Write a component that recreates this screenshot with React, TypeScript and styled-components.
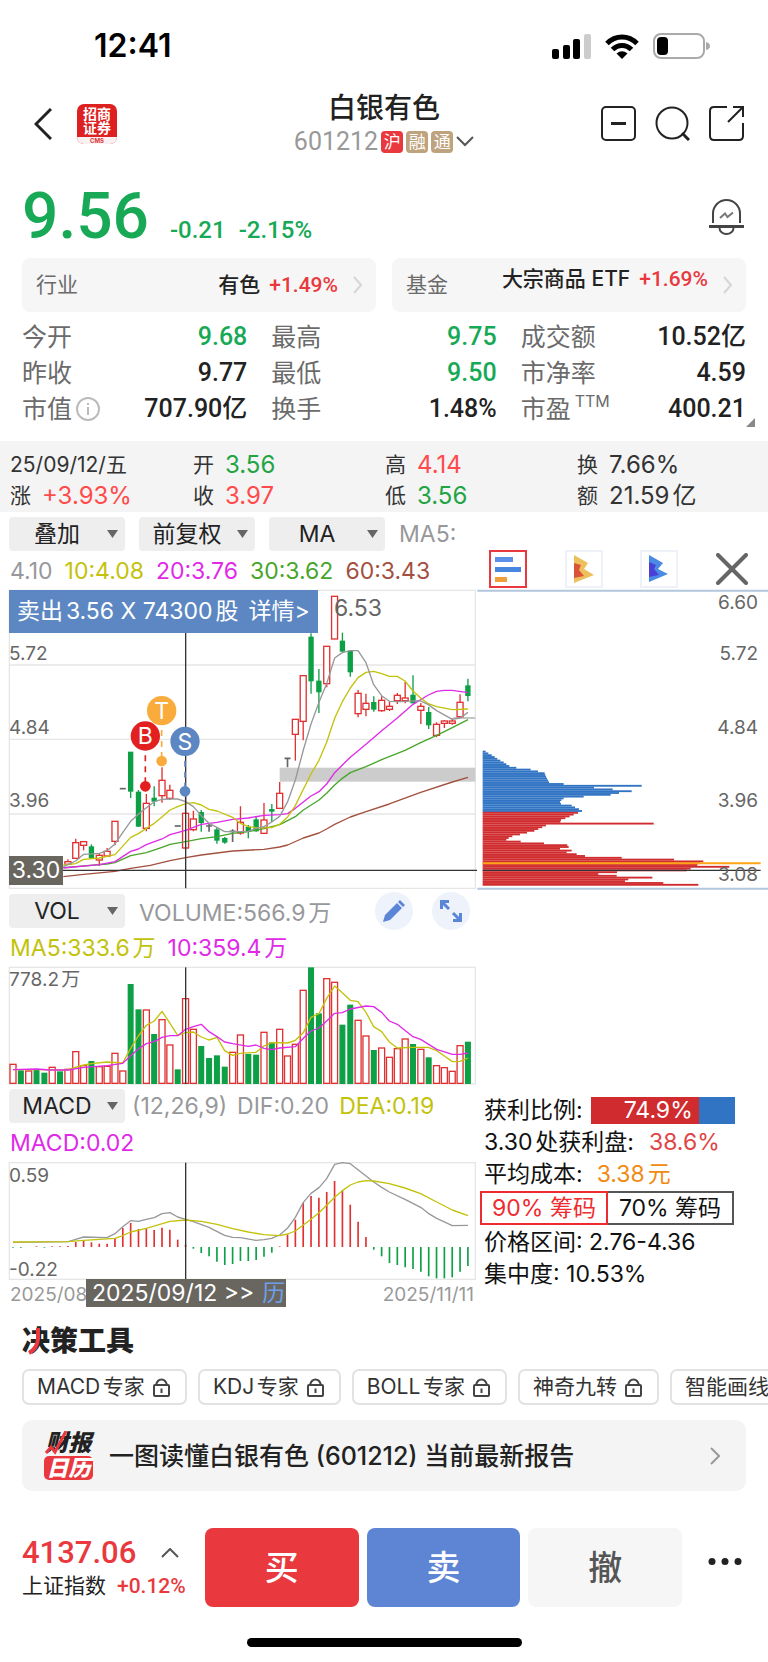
import React from "react";
import styled, { createGlobalStyle } from "styled-components";

const UI = '"Inter", "Noto Sans CJK SC", sans-serif';
const NUM = '"Roboto", "Noto Sans CJK SC", sans-serif';

const UP = "#e9383e";
const DOWN = "#18a957";
const CHART_RED = "#e03232";
const CHART_GREEN = "#0da046";
const GRID = "#e6e6e6";
const MA_GRAY = "#97989b";
const MA_YELLOW = "#c3c20b";
const MA_PINK = "#e02ae8";
const MA_GREEN = "#48a52b";
const MA_BROWN = "#a3503f";

const Global = createGlobalStyle`
  *, *::before, *::after { box-sizing: border-box; }
  body { margin: 0; background: #fff; color: #222; font-family: ${UI}; text-autospace: normal; }
  button, select { font: inherit; color: inherit; border: 0; background: none; padding: 0; margin: 0; cursor: pointer; }
  a { color: inherit; text-decoration: none; }
  dl, dd, dt, h1, h2, p { margin: 0; font-weight: inherit; }
  svg { display: block; flex: none; }
`;

const Page = styled.div`
  width: 100%;
  overflow: hidden;
`;

/* ---------- status bar and header ---------- */

const StatusBar = styled.div`
  display: flex;
  align-items: center;
  justify-content: space-between;
  height: 90px;
  padding: 2px 58px 0 94px;
  color: #000;
`;
const Clock = styled.time`
  font-size: 32px;
  line-height: 36px;
  font-weight: 600;
`;
const StatusIcons = styled.div`
  display: flex;
  align-items: center;
  gap: 14px;
`;

const Header = styled.header`
  display: grid;
  grid-template-columns: 1fr auto 1fr;
  align-items: center;
  padding: 0 24px 0 34px;
`;
const HeaderSide = styled.div<{ $end?: boolean }>`
  display: flex;
  align-items: center;
  justify-content: ${(p) => (p.$end ? "flex-end" : "flex-start")};
  gap: ${(p) => (p.$end ? 19 : 25)}px;
`;
const BrokerLogo = styled.a`
  display: flex;
  flex-direction: column;
  width: 40px;
  border-radius: 7px;
  overflow: hidden;
  background: #dd2020;
  color: #fff;
  text-align: center;
  font-size: 14px;
  line-height: 14px;
  font-weight: 700;
  padding-top: 3px;
`;
const BrokerCode = styled.span`
  margin-top: 2px;
  background: #f9f1f1;
  color: #d33;
  font-size: 6px;
  line-height: 7px;
`;
const TitleBlock = styled.div`
  display: flex;
  flex-direction: column;
  align-items: center;
  padding-right: 20px;
`;
const StockName = styled.h1`
  font-size: 28px;
  line-height: 36px;
  font-weight: 500;
  padding-left: 10px;
`;
const CodeRow = styled.button`
  display: flex;
  align-items: center;
  gap: 3px;
  padding-left: 10px;
  font-family: ${NUM};
  font-size: 25px;
  line-height: 31px;
  color: #999;
`;
const Badge = styled.span<{ $bg: string }>`
  width: 22px;
  height: 22px;
  border-radius: 4px;
  background: ${(p) => p.$bg};
  color: #fff;
  font-size: 17px;
  line-height: 22px;
  text-align: center;
`;

/* ---------- quote ---------- */

const PriceRow = styled.section`
  display: flex;
  align-items: baseline;
  gap: 13px;
  height: 60px;
  margin-top: 30px;
  padding: 0 24px 0 22px;
  font-family: ${NUM};
  font-size: 24px;
  line-height: 60px;
  font-weight: 500;
  color: ${DOWN};
`;
const Price = styled.strong`
  font-size: 64px;
  font-weight: 500;
  margin-right: 8px;
`;
const BellButton = styled.button`
  margin-left: auto;
  align-self: center;
`;

const CardRow = styled.nav`
  display: grid;
  grid-template-columns: 1fr 1fr;
  gap: 16px;
  margin-top: 11px;
  padding: 0 22px;
`;
const Card = styled.a`
  display: flex;
  align-items: center;
  height: 54px;
  padding: 0 14px;
  border-radius: 8px;
  background: #f6f6f6;
  font-size: 21px;
  line-height: 26px;
  color: #6b6b6b;
`;
const CardValue = styled.span<{ $raised?: boolean }>`
  display: flex;
  gap: 9px;
  margin-left: auto;
  margin-right: 15px;
  padding-bottom: ${(p) => (p.$raised ? 12 : 0)}px;
  font-weight: 500;
  color: #222;
`;
const Rise = styled.span`
  font-family: ${NUM};
  font-weight: 500;
  color: ${UP};
`;

const Quotes = styled.dl`
  display: grid;
  grid-template-columns: repeat(3, 1fr);
  column-gap: 24px;
  position: relative;
  margin-top: 7px;
  padding: 0 22px;
  font-size: 25px;
  line-height: 36px;
`;
const Quote = styled.div`
  display: flex;
  justify-content: space-between;
`;
const QuoteLabel = styled.dt`
  display: flex;
  align-items: center;
  gap: 4px;
  color: #6b6b6b;
`;
const Ttm = styled.sup`
  font-size: 16px;
  line-height: 16px;
  align-self: flex-start;
  padding-top: 2px;
`;
const QuoteValue = styled.dd<{ $c?: string }>`
  font-family: ${NUM};
  font-weight: 500;
  text-autospace: no-autospace;
  color: ${(p) => p.$c ?? "#222"};
`;
const Corner = styled.svg`
  position: absolute;
  right: 13px;
  bottom: 0;
`;

/* ---------- selected-day band ---------- */

const Band = styled.dl`
  display: grid;
  grid-template-columns: 183fr 192fr 192fr 191fr;
  margin-top: 14px;
  padding: 8px 0 1px 10px;
  background: #f4f4f4;
  font-size: 24px;
  line-height: 31px;
  color: #333;
`;
const BandItem = styled.div`
  display: flex;
  gap: 11px;
`;
const BandLabel = styled.dt`
  font-size: 21px;
`;
const BandValue = styled.dd<{ $c?: string; $small?: boolean }>`
  font-size: ${(p) => (p.$small ? 21 : 24)}px;
  color: ${(p) => p.$c ?? "#333"};
`;

/* ---------- charts ---------- */

const Board = styled.main`
  display: grid;
  grid-template-columns: minmax(0, 476fr) minmax(0, 292fr);
`;
const Column = styled.div`
  display: flex;
  flex-direction: column;
  min-width: 0;
`;
const ToolRow = styled.div`
  display: flex;
  align-items: center;
  gap: 14px;
  height: 34px;
  margin-top: 5px;
  padding-left: 9px;
  font-size: 23px;
  color: ${MA_GRAY};
  white-space: nowrap;
`;
const PickerBox = styled.label`
  display: grid;
  align-items: center;
  flex: none;
  width: 116px;
  height: 34px;
  border-radius: 4px;
  background: #eee;
`;
const Picker = styled.select`
  grid-area: 1 / 1;
  appearance: none;
  width: 100%;
  height: 34px;
  padding-right: 20px;
  text-align: center;
  text-align-last: center;
  font-size: 23px;
  color: #222;
`;
const PickerArrow = styled.svg`
  grid-area: 1 / 1;
  justify-self: end;
  margin-right: 7px;
  pointer-events: none;
`;
const Hint = styled.span<{ $c?: string }>`
  color: ${(p) => p.$c ?? MA_GRAY};
`;
const HintGroup = styled.span`
  display: flex;
  gap: 10px;
  margin-left: -7px;
`;
const RoundButtons = styled.span`
  display: flex;
  gap: 19px;
  margin-left: auto;
  padding-right: 6px;
`;
const RoundButton = styled.button`
  display: grid;
  place-items: center;
  width: 38px;
  height: 38px;
  border-radius: 50%;
  background: #edf2fb;
`;
const Legend = styled.p`
  display: flex;
  gap: 12px;
  padding: 2px 0 0 10px;
  font-size: 23px;
  line-height: 37px;
  white-space: nowrap;
`;
const ChartBox = styled.div`
  position: relative;
`;
const ChartSvg = styled.svg`
  width: 100%;
  height: auto;
  overflow: visible;
  font-family: ${UI};
`;
const TradeTip = styled.a`
  position: absolute;
  left: 9px;
  top: 0;
  display: flex;
  gap: 10px;
  padding: 0 8px;
  background: #5c87c2;
  color: #fff;
  font-size: 23px;
  line-height: 43px;
  white-space: nowrap;
`;
const DateRow = styled.div`
  display: flex;
  justify-content: space-between;
  position: relative;
  padding: 0 2px 0 10px;
  font-size: 19px;
  line-height: 30px;
  color: #999;
`;
const DateTag = styled.button`
  position: absolute;
  left: 86px;
  bottom: 3px;
  display: flex;
  gap: 8px;
  padding: 0 1px 0 6px;
  background: #68665f;
  color: #fff;
  font-size: 23px;
  line-height: 28px;
  white-space: nowrap;
`;
const CalMark = styled.span`
  color: #6f9fe8;
`;

const ModeRow = styled.div`
  display: flex;
  align-items: flex-end;
  justify-content: space-between;
  height: 78px;
  padding: 0 20px 2px 13px;
`;
const ModeButton = styled.button<{ $on?: boolean }>`
  display: grid;
  place-items: center;
  width: 38px;
  height: 38px;
  border: ${(p) => (p.$on ? "2px solid #e9383e" : "2px solid #eef2f8")};
`;
const CloseButton = styled.button`
  display: grid;
  place-items: center;
  width: 32px;
  height: 38px;
`;

const ChipInfo = styled.section`
  margin-top: auto;
  padding: 0 0 20px 8px;
  font-size: 23px;
  line-height: 32px;
  color: #111;
  white-space: nowrap;
`;
const InfoLine = styled.p<{ $gap?: number }>`
  display: flex;
  align-items: center;
  gap: ${(p) => p.$gap ?? 8}px;
`;
const RatioBar = styled.span`
  display: block;
  width: 144px;
  height: 27px;
  background: linear-gradient(90deg, #d02c2f 75%, #3174c4 75%);
  color: #fff;
  line-height: 27px;
  padding-left: 33px;
  font-size: 23px;
`;
const Segments = styled.div`
  display: flex;
  width: 254px;
  margin: 1px 0 1px -4px;
`;
const Segment = styled.button<{ $on?: boolean }>`
  flex: 1;
  height: 34px;
  border: 2px solid ${(p) => (p.$on ? "#ee2b30" : "#555")};
  border-left-width: ${(p) => (p.$on ? 2 : 0)}px;
  color: ${(p) => (p.$on ? "#ee2b30" : "#111")};
  line-height: 30px;
`;

/* ---------- tools ---------- */

const Tools = styled.section`
  padding: 14px 0 0 22px;
`;
const ToolsTitle = styled.h2`
  position: relative;
  display: inline-block;
  font-size: 28px;
  line-height: 34px;
  font-weight: 900;
`;
const TitleStroke = styled.svg`
  position: absolute;
  left: 5px;
  top: 3px;
`;
const ChipRow = styled.div`
  display: flex;
  gap: 11px;
  margin-top: 11px;
  overflow: hidden;
`;
const Chip = styled.button`
  display: flex;
  align-items: center;
  gap: 8px;
  flex: none;
  height: 36px;
  padding: 0 15px 0 13px;
  border: 2px solid #e2e2e2;
  border-radius: 7px;
  font-size: 21px;
  line-height: 30px;
  color: #333;
`;
const Banner = styled.a`
  display: flex;
  align-items: center;
  gap: 16px;
  height: 71px;
  margin: 15px 22px 0 0;
  padding: 0 26px 0 22px;
  border-radius: 10px;
  background: #f4f4f4;
  font-size: 25px;
  line-height: 36px;
  font-weight: 500;
`;
const ReportLogo = styled.span`
  position: relative;
  display: flex;
  flex-direction: column;
  width: 49px;
  text-align: center;
  font-size: 23px;
  line-height: 25px;
  font-weight: 900;
  font-style: italic;
`;
const ReportLogoBox = styled.span`
  border-radius: 5px;
  background: ${UP};
  color: #fff;
  font-size: 22px;
  line-height: 24px;
`;
const ReportTick = styled.svg`
  position: absolute;
  left: 0;
  top: 0;
`;
const BannerChevron = styled.span`
  margin-left: auto;
`;

/* ---------- trade bar ---------- */

const TradeBar = styled.footer`
  display: flex;
  align-items: center;
  padding: 37px 26px 0 22px;
`;
const IndexBox = styled.a`
  display: flex;
  flex-direction: column;
  flex: none;
  width: 183px;
  font-size: 21px;
  line-height: 30px;
  white-space: nowrap;
`;
const IndexValue = styled.span`
  display: flex;
  align-items: center;
  gap: 25px;
  font-family: ${NUM};
  font-size: 31px;
  line-height: 36px;
  font-weight: 500;
  color: ${UP};
`;
const IndexName = styled.span`
  display: flex;
  gap: 11px;
`;
const TradeButtons = styled.div`
  display: flex;
  flex: 1;
  gap: 8px;
`;
const TradeButton = styled.button<{ $bg: string; $c?: string }>`
  flex: 1;
  height: 79px;
  border-radius: 8px;
  background: ${(p) => p.$bg};
  color: ${(p) => p.$c ?? "#fff"};
  font-size: 34px;
  line-height: 40px;
  font-weight: 500;
`;
const MoreButton = styled.button`
  margin-left: 26px;
  padding-bottom: 13px;
`;
const HomeBar = styled.div`
  width: 275px;
  height: 9px;
  margin: 31px auto 13px;
  border-radius: 5px;
  background: #000;
`;

/* ---------- chart data (thirds of a pixel, origin at the chart corner) ---------- */

type Kind = "r" | "g" | "k";
/* kind, wick top, wick bottom, body top, body bottom */
type Candle = [Kind, number, number, number, number];

const FIRST_CANDLE = 7;
const candles: Candle[] = [
  ["r", 838, 855, 845, 853], ["r", 776, 836, 788, 835], ["r", 785, 811, 785, 796],
  ["g", 793, 833, 801, 833], ["r", 820, 858, 826, 840], ["r", 804, 828, 814, 828],
  ["r", 724, 796, 724, 784], ["k", 626, 626, 626, 626], ["g", 517, 654, 517, 633],
  ["g", 630, 741, 637, 738], ["r", 642, 754, 670, 745], ["g", 619, 679, 655, 663],
  ["r", 562, 668, 601, 647], ["r", 614, 660, 631, 655], ["k", 738, 738, 738, 738],
  ["r", 650, 804, 700, 804], ["r", 692, 754, 717, 749], ["g", 690, 755, 698, 727],
  ["k", 730, 755, 738, 738], ["g", 742, 791, 750, 780], ["g", 771, 791, 776, 786],
  ["k", 748, 786, 754, 754], ["r", 679, 764, 727, 759], ["g", 735, 775, 743, 753],
  ["g", 708, 755, 720, 752], ["r", 669, 760, 720, 760], ["g", 672, 727, 689, 693],
  ["r", 606, 687, 640, 685], ["k", 535, 562, 535, 535], ["r", 418, 542, 418, 463],
  ["r", 287, 481, 287, 424], ["g", 160, 341, 172, 302], ["g", 267, 399, 304, 335],
  ["r", 199, 322, 199, 311], ["r", 49, 177, 49, 177], ["g", 158, 215, 184, 213],
  ["g", 214, 290, 214, 275], ["r", 330, 412, 340, 401], ["r", 341, 409, 370, 388],
  ["g", 349, 395, 368, 387], ["r", 349, 395, 361, 392], ["r", 365, 393, 379, 388],
  ["r", 339, 372, 346, 362], ["r", 306, 370, 354, 362], ["g", 286, 370, 346, 368],
  ["r", 369, 432, 379, 391], ["g", 381, 447, 398, 434], ["r", 427, 472, 433, 466],
  ["r", 420, 444, 423, 430], ["r", 415, 434, 423, 430], ["r", 343, 414, 367, 410],
  ["g", 296, 364, 318, 346],
];

const priceLines: [string, string][] = [
  [MA_BROWN, "190,890 251,883 345,874 392,865 451,856 510,842 557,833 604,825 651,819 698,813 792,808 839,801 863,795 910,774 957,759 980,747 1004,733 1051,711 1098,695 1168,672 1262,637 1357,606 1404,592"],
  [MA_GREEN, "190,863 321,852 345,848 392,827 439,818 486,802 510,793 557,785 604,776 651,770 698,760 745,755 792,746 839,734 886,710 910,690 957,660 980,640 1004,615 1027,595 1051,578 1098,560 1145,539 1215,511 1262,488 1310,466 1357,443 1404,419"],
  [MA_PINK, "190,864 298,854 345,845 392,814 415,807 439,794 486,777 510,764 557,751 604,733 651,727 698,718 745,714 792,706 839,704 863,701 886,685 910,666 933,648 957,635 980,612 1004,578 1027,555 1051,532 1098,493 1145,452 1192,414 1239,373 1285,345 1310,334 1333,331 1357,331 1404,338"],
  [MA_YELLOW, "190,855 227,851 251,838 298,834 345,824 392,772 415,761 439,745 463,730 486,711 510,690 533,680 557,671 580,668 604,675 627,688 651,693 698,712 721,730 745,740 768,743 815,743 839,733 863,711 886,677 910,628 933,582 957,541 980,487 1004,415 1027,365 1051,324 1074,293 1098,277 1121,274 1145,281 1168,289 1192,289 1215,303 1239,333 1262,354 1285,371 1310,380 1357,389 1404,387"],
  [MA_GRAY, "190,860 227,843 251,823 298,820 321,812 345,792 368,758 392,724 415,703 439,683 463,665 486,658 510,657 533,657 557,665 580,680 604,707 627,730 651,742 674,755 698,755 745,754 768,745 792,740 815,726 839,709 863,665 886,600 910,510 933,432 957,367 980,311 1004,234 1027,218 1051,212 1074,212 1098,248 1121,314 1145,347 1168,364 1200,365 1260,362 1285,374 1310,392 1357,418 1380,414 1404,397"],
];

const volumeTops =
  "r536 g556 r556 g553 g563 r545 g559 r551 r498 r540 g528 r543 r542 r503 r556 g297 g373 r373 g447 r402 r478 g553 r339 r431 g483 g519 g511 g545 r500 r448 g507 g509 r440 g472 r431 r511 r476 r314 g247 g385 r279 r290 g419 g359 r404 r451 g495 r487 r515 r489 r460 g477 r491 g517 r540 r546 r557 r480 g470".split(" ");

const volumeLines: [string, string][] = [
  [MA_YELLOW, "39,554 110,554 200,555 251,540 274,536 321,531 368,534 392,490 415,453 439,421 463,408 486,379 510,415 533,451 557,443 580,441 604,456 627,465 651,457 674,497 698,511 721,505 768,502 792,483 815,473 863,474 886,466 910,443 933,397 957,386 980,340 1004,303 1027,323 1051,346 1074,350 1098,382 1121,425 1145,440 1168,471 1192,489 1239,487 1285,487 1310,497 1333,513 1357,530 1380,529 1404,519"],
  [MA_PINK, "39,554 110,552 150,555 205,555 251,547 321,542 368,535 392,512 415,492 439,476 463,470 486,457 510,452 533,452 557,433 580,425 604,418 627,440 651,455 674,471 698,476 745,484 768,480 792,490 815,494 839,489 886,485 910,460 933,438 957,429 980,408 1004,385 1027,383 1051,372 1098,363 1121,365 1145,382 1168,408 1192,418 1239,455 1262,463 1310,493 1357,508 1380,508 1404,504"],
];

const macdEnds = [
  488, 488, 486, 484, 488, 484, 484, 483, 471, 465, 472, 476, 476, 459, 429, 414, 432, 432, 435, 428,
  434, 464, 479, 491, 504, 514, 530, 540, 537, 528, 528, 525, 515, 503, 484, 448, 404, 354, 333, 338,
  321, 288, 316, 359, 410, 456, 494, 514, 534, 540, 547, 552, 560, 574, 580, 580, 577, 560, 543,
];

const macdLines: [string, string][] = [
  [MA_GRAY, "39,472 205,470 227,463 251,456 321,458 345,446 368,425 392,407 415,409 439,403 463,398 486,386 510,383 533,396 557,403 580,410 627,427 674,451 698,457 721,458 768,466 792,464 815,460 839,450 863,429 886,397 910,352 933,325 957,308 980,281 1004,238 1027,233 1051,236 1074,254 1098,273 1121,291 1145,307 1168,321 1215,343 1262,367 1285,385 1310,400 1357,422 1404,421"],
  [MA_YELLOW, "39,471 205,470 251,466 345,460 368,452 392,441 439,430 510,409 557,405 604,409 651,418 698,431 745,441 792,449 839,452 863,447 886,438 910,420 933,403 957,383 980,361 1004,337 1027,317 1051,300 1074,291 1098,287 1121,288 1168,296 1215,309 1262,326 1310,351 1357,375 1404,392"],
];

const holdings = [
  9, 17, 27, 36, 44, 53, 63, 71, 80, 101, 144, 166, 186, 188, 190, 193, 196, 199, 243, 477, 334, 390,
  447, 409, 384, 303, 243, 236, 232, 235, 267, 277, 289, 298,
  286, 273, 261, 248, 235, 233, 513, 190, 179, 167, 155, 133, 112, 89, 78, 71, 114, 184, 254, 258, 232,
  267, 252, 282, 307, 417, 574, 662, 652, 644, 740, 624, 612, 403, 347, 402, 509, 437, 427, 542, 647,
];
const BLUE_ROWS = 34;

const barX = (i: number) => 39 + i * 23.53;
const hue = (k: string) => (k === "r" ? CHART_RED : k === "g" ? CHART_GREEN : "#666");

function Lines({ items }: { items: [string, string][] }) {
  return (
    <>
      {items.map(([c, pts]) => (
        <polyline key={c} points={pts} fill="none" stroke={c} strokeWidth={4} strokeLinejoin="round" />
      ))}
    </>
  );
}

function Marker({ x, y, dot, c, letter }: { x: number; y: number; dot: number; c: string; letter: string }) {
  return (
    <g>
      <line x1={x} x2={x} y1={y + 58} y2={dot} stroke={c} strokeWidth={5} strokeDasharray="18 15" />
      <circle cx={x} cy={dot} r={16} fill={c} />
      <circle cx={x} cy={y} r={44} fill={c} />
      <text x={x} y={y + 25} fontSize={69} fill="#fff" textAnchor="middle">{letter}</text>
    </g>
  );
}

function PriceChart() {
  return (
    <ChartSvg viewBox="0 0 476 299" role="img" aria-label="K线图">
      <g transform="scale(0.33333) translate(0 -30)">
        <path d="M28 31H1426V925H28ZM28 255H1426M28 478H1426M28 702H1426" fill="none" stroke={GRID} strokeWidth={4} />
        <rect x={839} y={563} width={587} height={42} fill="#ccc" />
        <path d="M1360 414H1426" stroke="#c4c4c4" strokeWidth={6} />
        {candles.map(([k, wt, wb, bt, bb], n) => {
          const x = barX(n + FIRST_CANDLE);
          const c = hue(k);
          if (k === "k")
            return <path key={n} d={`M${x - 9} ${bt}H${x + 9}M${x} ${wt}V${wb}`} stroke={c} strokeWidth={5} />;
          return (
            <g key={n} stroke={c} strokeWidth={4}>
              <path d={k === "r" ? `M${x} ${wt}V${bt}M${x} ${bb}V${wb}` : `M${x} ${wt}V${wb}`} />
              <rect x={x - (k === "r" ? 9 : 6)} y={bt} width={k === "r" ? 18 : 12} height={bb - bt} fill={k === "r" ? "#fff" : c} />
            </g>
          );
        })}
        <Lines items={priceLines} />
        <path d="M557 100V925M189 871H1431" stroke="#333" strokeWidth={4} />
        <Marker x={485} y={392} dot={543} c="#f9ac3c" letter="T" />
        <Marker x={436} y={468} dot={619} c="#e22020" letter="B" />
        <Marker x={555} y={484} dot={634} c="#5c87c2" letter="S" />
        <rect x={27} y={828} width={162} height={87} fill="#68665f" />
      </g>
      <g fontSize={19} fill="#666">
        <text x={9} y={70}>5.72</text>
        <text x={9} y={144}>4.84</text>
        <text x={9} y={217}>3.96</text>
        <text x={334} y={26} fontSize={23}>6.53</text>
        <text x={36} y={288} fontSize={23} fill="#fff" textAnchor="middle">3.30</text>
      </g>
    </ChartSvg>
  );
}

function VolumeChart() {
  return (
    <ChartSvg viewBox="0 0 476 117" role="img" aria-label="成交量">
      <g transform="scale(0.33333) translate(0 -246)">
        <rect x={28} y={247} width={1398} height={350} fill="none" stroke={GRID} strokeWidth={4} />
        {volumeTops.map((v, i) => {
          const red = v[0] === "r";
          const top = Number(v.slice(1));
          return (
            <rect
              key={i}
              x={barX(i) - (red ? 9 : 7)}
              y={top + 2}
              width={red ? 18 : 14}
              height={593 - top}
              fill={red ? "#fff" : CHART_GREEN}
              stroke={hue(v[0])}
              strokeWidth={4}
            />
          );
        })}
        <Lines items={volumeLines} />
        <path d="M557 247V597" stroke="#333" strokeWidth={4} />
      </g>
      <text x={9} y={19} fontSize={19} fill="#666">778.2万</text>
    </ChartSvg>
  );
}

function MacdChart() {
  return (
    <ChartSvg viewBox="0 0 476 118" role="img" aria-label="MACD">
      <g transform="scale(0.33333) translate(0 -231)">
        <rect x={28} y={233} width={1398} height={350} fill="none" stroke={GRID} strokeWidth={4} />
        {macdEnds.map((v, i) => (
          <path key={i} d={`M${barX(i)} 486V${v}`} stroke={v > 486 ? CHART_GREEN : CHART_RED} strokeWidth={5} />
        ))}
        <Lines items={macdLines} />
        <path d="M557 233V583" stroke="#333" strokeWidth={4} />
      </g>
      <g fontSize={19} fill="#666">
        <text x={9} y={20}>0.59</text>
        <text x={9} y={114}>-0.22</text>
      </g>
    </ChartSvg>
  );
}

function ChipChart() {
  const labels: [string, number][] = [["6.60", 19], ["5.72", 70], ["4.84", 144], ["3.96", 217], ["3.08", 291]];
  return (
    <ChartSvg viewBox="0 0 292 299" role="img" aria-label="筹码分布">
      <g transform="scale(0.33333) translate(-18 -150)">
        <path d="M22 152H894M22 1046H894" stroke="#b3c6dc" strokeWidth={6} />
        {holdings.map((w, i) => (
          <rect key={i} x={38} y={632 + i * 5.4} width={w} height={5.6} fill={i < BLUE_ROWS ? "#3174c4" : "#d02c2f"} />
        ))}
        <path d="M38 970H872" stroke="#ffa515" strokeWidth={6} />
        <path d="M38 991H872" stroke="#333" strokeWidth={4} />
      </g>
      <g fontSize={19} fill="#666" textAnchor="end">
        {labels.map(([t, y]) => (
          <text key={t} x={282} y={y}>{t}</text>
        ))}
      </g>
    </ChartSvg>
  );
}

/* ---------- small parts ---------- */

function Chevron({ w, h, c, s = 2 }: { w: number; h: number; c: string; s?: number }) {
  return (
    <svg width={w} height={h} viewBox={`0 0 ${w} ${h}`} fill="none" stroke={c} strokeWidth={s} aria-hidden>
      <path d={`M1 1L${w - 1} ${h / 2}L1 ${h - 1}`} />
    </svg>
  );
}

function Lock() {
  return (
    <svg width="17" height="19" viewBox="0 0 17 19" fill="none" stroke="#444" strokeWidth="2" aria-hidden>
      <rect x="1" y="7" width="15" height="11" rx="1" />
      <path d="M3 7C4 3 6 1.5 8.500 1.500S13 3 14 7M8.500 10.500V15" />
    </svg>
  );
}

function Dropdown({ label, value }: { label: string; value: string }) {
  return (
    <PickerBox>
      <Picker aria-label={label} defaultValue={value}>
        <option>{value}</option>
      </Picker>
      <PickerArrow width="11" height="8" viewBox="0 0 11 8" aria-hidden>
        <path d="M0 0H11L5.500 8Z" fill="#666" />
      </PickerArrow>
    </PickerBox>
  );
}

const quotes: { label: string; value: string; c?: string; info?: boolean; ttm?: boolean }[] = [
  { label: "今开", value: "9.68", c: DOWN },
  { label: "最高", value: "9.75", c: DOWN },
  { label: "成交额", value: "10.52亿" },
  { label: "昨收", value: "9.77" },
  { label: "最低", value: "9.50", c: DOWN },
  { label: "市净率", value: "4.59" },
  { label: "市值", value: "707.90亿", info: true },
  { label: "换手", value: "1.48%" },
  { label: "市盈", value: "400.21", ttm: true },
];

const RED_TEXT = "#ff4b4b";
const GREEN_TEXT = "#23a444";
const band: [string, string, string?][] = [
  ["", "25/09/12/五"],
  ["开", "3.56", GREEN_TEXT],
  ["高", "4.14", RED_TEXT],
  ["换", "7.66%"],
  ["涨", "+3.93%", RED_TEXT],
  ["收", "3.97", RED_TEXT],
  ["低", "3.56", GREEN_TEXT],
  ["额", "21.59亿"],
];

export default function App() {
  return (
    <Page>
      <Global />
      <StatusBar>
        <Clock>12:41</Clock>
        <StatusIcons>
          <svg width="39" height="25" viewBox="0 0 39 25" aria-hidden>
            <rect x="0" y="15" width="7" height="10" rx="2" />
            <rect x="11" y="11" width="7" height="14" rx="2" />
            <rect x="21" y="5" width="7" height="20" rx="2" />
            <rect x="32" y="0" width="7" height="25" rx="2" fill="#ccc" />
          </svg>
          <svg width="34" height="25" viewBox="0 0 34 25" fill="none" stroke="#000" strokeWidth="5" aria-hidden>
            <path d="M2 9.500C10.500 .8 23.500 .8 32 9.500M7.500 15.500C13 10 21 10 26.500 15.500" />
            <path d="M17 25L11.500 19.500Q17 15 22.500 19.500Z" fill="#000" stroke="none" />
          </svg>
          <svg width="57" height="26" viewBox="0 0 57 26" aria-hidden>
            <rect x="1" y="1" width="50" height="24" rx="7" fill="none" stroke="#aaa" strokeWidth="2" />
            <rect x="4" y="4" width="11" height="18" rx="4" />
            <path d="M53 9Q57 10 57 13T53 17Z" fill="#aaa" />
          </svg>
        </StatusIcons>
      </StatusBar>

      <Header>
        <HeaderSide>
          <button aria-label="返回">
            <svg width="18" height="32" viewBox="0 0 18 32" fill="none" stroke="#222" strokeWidth="3" aria-hidden>
              <path d="M17 1L2 16L17 31" />
            </svg>
          </button>
          <BrokerLogo href="#broker">
            <span>招商</span>
            <span>证券</span>
            <BrokerCode>CMS</BrokerCode>
          </BrokerLogo>
        </HeaderSide>
        <TitleBlock>
          <StockName>白银有色</StockName>
          <CodeRow>
            601212
            <Badge $bg={UP}>沪</Badge>
            <Badge $bg="#bfa37e">融</Badge>
            <Badge $bg="#bfa37e">通</Badge>
            <svg width="18" height="11" viewBox="0 0 18 11" fill="none" stroke="#555" strokeWidth="2" aria-hidden>
              <path d="M1 1L9 9L17 1" />
            </svg>
          </CodeRow>
        </TitleBlock>
        <HeaderSide $end>
          <button aria-label="删除自选">
            <svg width="35" height="35" viewBox="0 0 35 35" fill="none" stroke="#222" strokeWidth="2" aria-hidden>
              <rect x="1" y="1" width="33" height="33" rx="4" />
              <path d="M10 17.500H25" strokeWidth="3" />
            </svg>
          </button>
          <button aria-label="搜索">
            <svg width="35" height="35" viewBox="0 0 35 35" fill="none" stroke="#222" strokeWidth="2" aria-hidden>
              <circle cx="17" cy="17" r="15.500" />
              <path d="M27 27L34 34" strokeWidth="3" />
            </svg>
          </button>
          <button aria-label="分享">
            <svg width="35" height="35" viewBox="0 0 35 35" fill="none" stroke="#222" strokeWidth="2" aria-hidden>
              <path d="M18 1H5Q1 1 1 5V30Q1 34 5 34H30Q34 34 34 30V17M24 1H34V11M34 1L19 16" />
            </svg>
          </button>
        </HeaderSide>
      </Header>

      <PriceRow>
        <Price>9.56</Price>
        <span>-0.21</span>
        <span>-2.15%</span>
        <BellButton aria-label="预警">
          <svg width="35" height="36" viewBox="0 0 35 36" fill="none" stroke="#444" strokeWidth="2" aria-hidden>
            <path d="M4 24V14.500A13.500 13.500 0 0 1 31 14.500V24" />
            <path d="M0 27.500H35" strokeWidth="3" />
            <path d="M10.500 29A7 6 0 0 0 24.500 29" />
            <path d="M11 19L16 14.500L18.500 18L24 13.500" stroke="#777" />
          </svg>
        </BellButton>
      </PriceRow>

      <CardRow>
        <Card href="#industry">
          行业
          <CardValue>
            有色<Rise>+1.49%</Rise>
          </CardValue>
          <Chevron w={9} h={18} c="#d6d6d6" />
        </Card>
        <Card href="#fund">
          基金
          <CardValue $raised>
            大宗商品 ETF<Rise>+1.69%</Rise>
          </CardValue>
          <Chevron w={9} h={18} c="#d6d6d6" />
        </Card>
      </CardRow>

      <Quotes>
        {quotes.map((q) => (
          <Quote key={q.label}>
            <QuoteLabel>
              {q.label}
              {q.info && (
                <svg width="24" height="24" viewBox="0 0 24 24" fill="none" stroke="#bbb" strokeWidth="2" aria-hidden>
                  <circle cx="12" cy="12" r="11" />
                  <path d="M12 10V18M12 6V8" />
                </svg>
              )}
              {q.ttm && <Ttm>TTM</Ttm>}
            </QuoteLabel>
            <QuoteValue $c={q.c}>{q.value}</QuoteValue>
          </Quote>
        ))}
        <Corner width="9" height="9" viewBox="0 0 9 9" aria-hidden>
          <path d="M9 0V9H0Z" fill="#888" />
        </Corner>
      </Quotes>

      <Band>
        {band.map(([label, value, c], i) => (
          <BandItem key={i}>
            {label && <BandLabel>{label}</BandLabel>}
            <BandValue $c={c} $small={!label}>{value}</BandValue>
          </BandItem>
        ))}
      </Band>

      <Board>
        <Column>
          <ToolRow>
            <Dropdown label="叠加" value="叠加" />
            <Dropdown label="复权" value="前复权" />
            <Dropdown label="均线" value="MA" />
            <Hint>MA5:</Hint>
          </ToolRow>
          <Legend>
            <Hint>4.10</Hint>
            <Hint $c={MA_YELLOW}>10:4.08</Hint>
            <Hint $c={MA_PINK}>20:3.76</Hint>
            <Hint $c={MA_GREEN}>30:3.62</Hint>
            <Hint $c={MA_BROWN}>60:3.43</Hint>
          </Legend>
          <ChartBox>
            <PriceChart />
            <TradeTip href="#trade">
              <span>卖出3.56 X 74300股</span>
              <span>详情&gt;</span>
            </TradeTip>
          </ChartBox>

          <ToolRow>
            <Dropdown label="副图一" value="VOL" />
            <Hint>VOLUME:566.9万</Hint>
            <RoundButtons>
              <RoundButton aria-label="画线">
                <svg width="22" height="22" viewBox="0 0 22 22" fill="#5b86d8" aria-hidden>
                  <path d="M0 22L2 15L14 3L19 8L7 20ZM15 2L17 0L22 5L20 7Z" />
                </svg>
              </RoundButton>
              <RoundButton aria-label="全屏">
                <svg width="22" height="22" viewBox="0 0 22 22" fill="none" stroke="#5b86d8" strokeWidth="3" aria-hidden>
                  <path d="M1.500 9V1.500H9M2 2L9 9M20.500 13V20.500H13M20 20L13 13" />
                </svg>
              </RoundButton>
            </RoundButtons>
          </ToolRow>
          <Legend>
            <Hint $c={MA_YELLOW}>MA5:333.6万</Hint>
            <Hint $c={MA_PINK}>10:359.4万</Hint>
          </Legend>
          <VolumeChart />

          <ToolRow>
            <Dropdown label="副图二" value="MACD" />
            <HintGroup>
              <Hint>(12,26,9)</Hint>
              <Hint>DIF:0.20</Hint>
              <Hint $c={MA_YELLOW}>DEA:0.19</Hint>
            </HintGroup>
          </ToolRow>
          <Legend>
            <Hint $c={MA_PINK}>MACD:0.02</Hint>
          </Legend>
          <MacdChart />
          <DateRow>
            <span>2025/08</span>
            <span>2025/11/11</span>
            <DateTag>
              <span>2025/09/12 &gt;&gt;</span>
              <CalMark>历</CalMark>
            </DateTag>
          </DateRow>
        </Column>

        <Column>
          <ModeRow>
            <ModeButton $on aria-label="筹码分布">
              <svg width="26" height="26" viewBox="0 0 26 26" aria-hidden>
                <rect x="0" y="1" width="18" height="5" fill="#5b8fe8" />
                <rect x="0" y="11" width="26" height="5" fill="#4886e0" />
                <rect x="0" y="21" width="12" height="5" fill="#f0a03a" />
              </svg>
            </ModeButton>
            <ModeButton aria-label="火焰山">
              <svg width="20" height="28" viewBox="0 0 20 28" aria-hidden>
                <path d="M0 0L14 8L10 14L20 20L0 28Z" fill="#ecc05c" />
                <path d="M0 8L7 10L5 15L10 21L0 23Z" fill="#dc5238" />
              </svg>
            </ModeButton>
            <ModeButton aria-label="活跃度">
              <svg width="20" height="28" viewBox="0 0 20 28" aria-hidden>
                <path d="M0 0L14 8L9 14L19 19L0 27Z" fill="#4a8ae4" />
                <path d="M0 7L7 10L5 14L10 20L0 22Z" fill="#4a40d8" />
              </svg>
            </ModeButton>
            <CloseButton aria-label="关闭">
              <svg width="32" height="32" viewBox="0 0 32 32" stroke="#666" strokeWidth="4" strokeLinecap="round" aria-hidden>
                <path d="M2 2L30 30M30 2L2 30" />
              </svg>
            </CloseButton>
          </ModeRow>
          <ChipChart />
          <ChipInfo>
            <InfoLine>
              获利比例: <RatioBar>74.9%</RatioBar>
            </InfoLine>
            <InfoLine $gap={15}>
              3.30处获利盘: <Hint $c="#e04545">38.6%</Hint>
            </InfoLine>
            <InfoLine $gap={14}>
              平均成本: <Hint $c="#f08a13">3.38元</Hint>
            </InfoLine>
            <Segments>
              <Segment $on>90% 筹码</Segment>
              <Segment>70% 筹码</Segment>
            </Segments>
            <InfoLine>价格区间: 2.76-4.36</InfoLine>
            <InfoLine>集中度: 10.53%</InfoLine>
          </ChipInfo>
        </Column>
      </Board>

      <Tools>
        <ToolsTitle>
          决策工具
          <TitleStroke width="16" height="28" viewBox="0 0 16 28" fill="none" stroke={UP} strokeWidth="4" aria-hidden>
            <path d="M11 1V12Q10 22 2 26" />
          </TitleStroke>
        </ToolsTitle>
        <ChipRow>
          {["MACD专家", "KDJ专家", "BOLL专家", "神奇九转", "智能画线"].map((t) => (
            <Chip key={t}>
              {t}
              <Lock />
            </Chip>
          ))}
        </ChipRow>
        <Banner href="#report">
          <ReportLogo>
            财报
            <ReportLogoBox>日历</ReportLogoBox>
            <ReportTick width="25" height="24" viewBox="0 0 25 24" fill="none" stroke={UP} strokeWidth="3" aria-hidden>
              <path d="M2 22L7 16L11 21L22 0" />
            </ReportTick>
          </ReportLogo>
          一图读懂白银有色 (601212) 当前最新报告
          <BannerChevron>
            <Chevron w={10} h={18} c="#999" />
          </BannerChevron>
        </Banner>
      </Tools>

      <TradeBar>
        <IndexBox href="#index">
          <IndexValue>
            4137.06
            <svg width="18" height="10" viewBox="0 0 18 10" fill="none" stroke="#555" strokeWidth="2" aria-hidden>
              <path d="M1 9L9 1L17 9" />
            </svg>
          </IndexValue>
          <IndexName>
            上证指数 <Rise>+0.12%</Rise>
          </IndexName>
        </IndexBox>
        <TradeButtons>
          <TradeButton $bg={UP}>买</TradeButton>
          <TradeButton $bg="#5e85d3">卖</TradeButton>
          <TradeButton $bg="#f6f6f6" $c="#555">撤</TradeButton>
        </TradeButtons>
        <MoreButton aria-label="更多">
          <svg width="34" height="7" viewBox="0 0 34 7" fill="#222" aria-hidden>
            <circle cx="4" cy="3.500" r="3.500" />
            <circle cx="17" cy="3.500" r="3.500" />
            <circle cx="30" cy="3.500" r="3.500" />
          </svg>
        </MoreButton>
      </TradeBar>
      <HomeBar />
    </Page>
  );
}
